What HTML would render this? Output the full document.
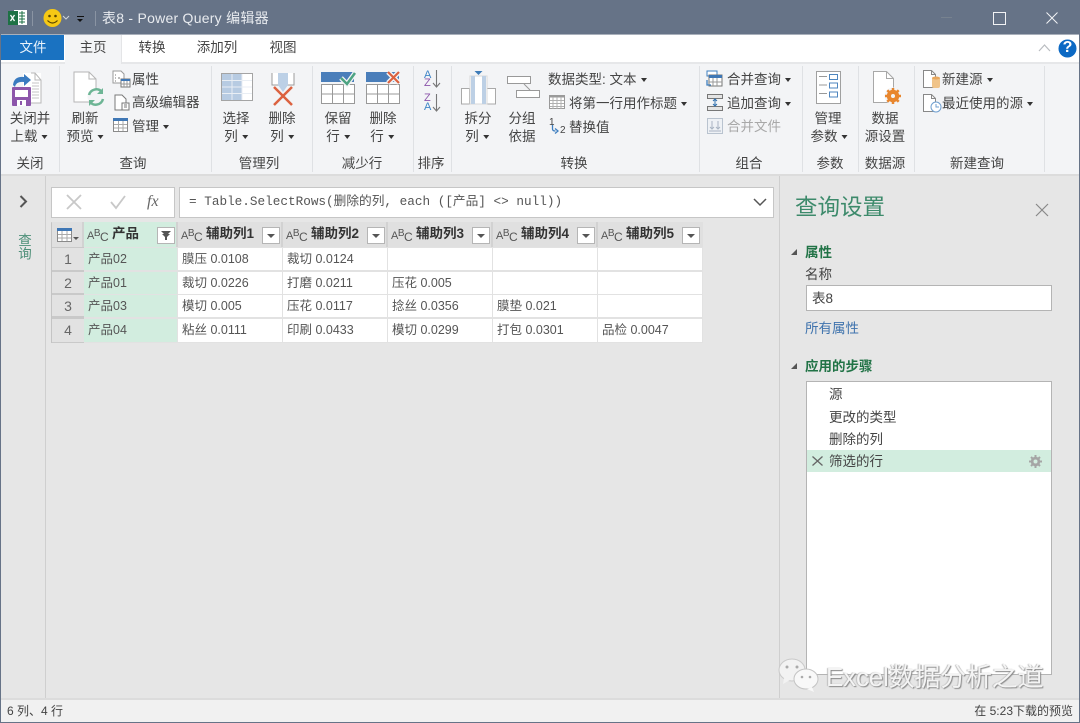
<!DOCTYPE html>
<html lang="zh"><head><meta charset="utf-8"><title>表8 - Power Query 编辑器</title>
<style>
html,body{margin:0;padding:0}
body{width:1080px;height:723px;overflow:hidden;position:relative;background:#e6e6e6;font-family:"Liberation Sans","Noto Sans CJK SC",sans-serif;font-size:13.5px;color:#444}
.a{position:absolute}
.t{position:absolute;white-space:nowrap;line-height:18px;height:18px;margin-top:1px}
.c{transform:translateX(-50%)}
.sep{position:absolute;top:66px;height:106px;width:1px;background:#dfe1e4}
.car::after{content:"";display:inline-block;border:3px solid transparent;border-top:4px solid #333;border-bottom:0;margin-left:4px;vertical-align:2px}
svg{position:absolute;overflow:visible}
.h{position:absolute;top:222px;height:25px;background:#e0e0e0;border-right:2px solid #d2d2d2;box-sizing:border-box}
.h b{position:absolute;top:3px;font-size:13.5px;color:#333;white-space:nowrap;line-height:18px}
.abc{position:absolute;top:5px;left:3px;font-size:11px;color:#555;line-height:16px;white-space:nowrap;letter-spacing:-.5px}
.abc i{font-style:normal;position:relative;top:-3px;font-size:10px}
.abc u{text-decoration:none;position:relative;top:2px;font-size:12px}
.dd{position:absolute;top:5px;width:18px;height:17px;background:#fff;border:1px solid #b5b5b5;box-sizing:border-box}
.dd::after{content:"";position:absolute;left:4px;top:6px;border:4px solid transparent;border-top:4px solid #555;border-bottom:0}
.cell{position:absolute;line-height:23px;font-size:12.5px;color:#555;white-space:nowrap;padding-left:4px;box-sizing:border-box;background:#fff}
.n{position:absolute;left:52px;width:32px;text-align:center;background:#e2e2e2;font-size:14px;color:#666;line-height:23px}
</style></head><body>

<!-- title bar -->
<div class="a" style="left:0;top:0;width:1080px;height:34px;background:#667387"></div>
<div class="a" style="left:0;top:34px;width:1080px;height:1px;background:#a9b0bb"></div>
<svg style="left:8px;top:9px" width="20" height="18"><rect x="6" y="1" width="13" height="15" fill="#fff"/><path d="M11 4h6M11 7h6M11 10h6M11 13h6M14 2v13" stroke="#1e7145" stroke-width="1"/><rect x="0" y="2" width="10" height="14" fill="#1e7145"/><path d="M2.500 6l4 6M6.500 6l-4 6" stroke="#fff" stroke-width="1.300"/></svg>
<div class="a" style="left:32px;top:11px;width:1px;height:15px;background:#8a94a3"></div>
<svg style="left:43px;top:9px" width="19" height="19"><circle cx="9.500" cy="9" r="9" fill="#f6c915"/><circle cx="6.500" cy="7" r="1.300" fill="#5a4500"/><circle cx="12.500" cy="7" r="1.300" fill="#5a4500"/><path d="M4.500 11.500q5 5 10 0" stroke="#5a4500" stroke-width="1.200" fill="none"/></svg>
<svg style="left:62px;top:15px" width="8" height="6"><path d="M1 1l3 3 3-3" stroke="#cfd4da" fill="none"/></svg>
<div class="a" style="left:77px;top:16px;width:7px;height:1px;background:#111"></div>
<div class="a" style="left:77px;top:19px;border:3.500px solid transparent;border-top:3px solid #111;border-bottom:0"></div>
<div class="a" style="left:95px;top:11px;width:1px;height:15px;background:#8a94a3"></div>
<div class="t" style="left:102px;top:8px;color:#e8ebef;font-size:14px;letter-spacing:.25px">表8 - Power Query 编辑器</div>
<div class="a" style="left:941px;top:17px;width:11px;height:1px;background:#77828f"></div>
<div class="a" style="left:993px;top:12px;width:11px;height:11px;border:1px solid #f2f3f5"></div>
<svg style="left:1046px;top:12px" width="12" height="12"><path d="M.5.500l11 11M11.500.500l-11 11" stroke="#f2f3f5"/></svg>

<!-- tab row -->
<div class="a" style="left:1px;top:35px;width:1078px;height:27px;background:#fff"></div>
<div class="a" style="left:1px;top:35px;width:63px;height:25px;background:#1a72c1"></div>
<div class="t c" style="left:33px;top:38px;color:#eaf3fb">文件</div>
<div class="a" style="left:65px;top:35px;width:57px;height:29px;background:#f3f4f6;border-right:1px solid #e4e5e7;box-sizing:border-box"></div>
<div class="t c" style="left:93px;top:38px">主页</div>
<div class="t c" style="left:152px;top:38px">转换</div>
<div class="t c" style="left:217px;top:38px">添加列</div>
<div class="t c" style="left:283px;top:38px">视图</div>
<svg style="left:1038px;top:44px" width="13" height="8"><path d="M1 7l5.500-6 5.500 6" stroke="#b9bcc0" fill="none" stroke-width="1.200"/></svg>
<svg style="left:1058px;top:39px" width="19" height="19"><circle cx="9.500" cy="9.500" r="9" fill="#0c69c4"/></svg>
<div class="t c" style="left:1067.500px;top:38px;color:#fff;font-weight:bold;font-size:16px">?</div>

<!-- ribbon -->
<div class="a" style="left:1px;top:64px;width:1078px;height:111px;background:#f3f4f6"></div>
<div class="a" style="left:65px;top:62px;width:56px;height:3px;background:#f3f4f6"></div>
<div class="a" style="left:0;top:62px;width:65px;height:2px;background:#e6e7e9"></div>
<div class="a" style="left:122px;top:62px;width:958px;height:2px;background:#e6e7e9"></div>
<div class="a" style="left:1px;top:174px;width:1078px;height:2px;background:#dcdcdc"></div>
<div class="sep" style="left:59px"></div><div class="sep" style="left:211px"></div><div class="sep" style="left:312px"></div><div class="sep" style="left:413px"></div><div class="sep" style="left:451px"></div><div class="sep" style="left:699px"></div><div class="sep" style="left:802px"></div><div class="sep" style="left:858px"></div><div class="sep" style="left:914px"></div><div class="sep" style="left:1044px"></div>

<!-- close & load -->
<svg style="left:11px;top:71px" width="32" height="36"><path d="M12 2h21l7 7v23H12z" transform="translate(0 0)" fill="#fff" stroke="#b8b8b8" style="display:none"/><path d="M12 2h15l3 0 0 0 0 30H12z" fill="#fff" stroke="none"/><path d="M20 2h4l6 7v23H20" fill="#fff" stroke="#b8b8b8"/><path d="M24 2v7h6" fill="none" stroke="#b8b8b8"/><path d="M21 12h7M21 15h7M21 18h7M21 21h7M21 24h7M21 27h7" stroke="#c4c4c4"/><path d="M2 14q1-9 11-8l0-3 7 6-7 6v-4q-8-1-9 5z" fill="#3a7bc0"/><rect x="1" y="16" width="19" height="19" rx="1" fill="#8d56ab"/><rect x="4" y="19" width="13" height="7" fill="#fff"/><rect x="6" y="29" width="9" height="6" fill="#fff"/><rect x="9" y="30" width="2" height="4" fill="#8d56ab"/></svg>
<div class="t c" style="left:30px;top:109px">关闭并</div>
<div class="t c car" style="left:29px;top:127px">上载</div>
<div class="t c" style="left:30px;top:154px">关闭</div>

<!-- refresh -->
<svg style="left:73px;top:71px" width="32" height="36"><path d="M1 1h15l7 7v23H1z" fill="#fff" stroke="#b5b5b5"/><path d="M16 1v7h7" fill="none" stroke="#b5b5b5"/><circle cx="23" cy="26" r="8.500" fill="#f3f4f6"/><path d="M16 24a7.500 7.500 0 0 1 13-3" stroke="#6db595" stroke-width="2.500" fill="none"/><path d="M30 17v6h-6z" fill="#6db595"/><path d="M30 28a7.500 7.500 0 0 1-13 3" stroke="#6db595" stroke-width="2.500" fill="none"/><path d="M16 35v-6h6z" fill="#6db595"/></svg>
<div class="t c" style="left:85px;top:109px">刷新</div>
<div class="t c car" style="left:85px;top:127px">预览</div>
<svg style="left:112px;top:70px" width="19" height="18"><path d="M1 1h8l3 3v9H1z" fill="#fff" stroke="#9a9a9a"/><path d="M3 5h1M3 8h1M6 8h2M3 11h1" stroke="#777"/><rect x="9" y="9" width="9" height="8" fill="#fff" stroke="#777"/><rect x="9" y="9" width="9" height="2" fill="#3f77b5"/><path d="M12 11v6M15 11v6M9 14h9" stroke="#999"/></svg>
<div class="t" style="left:132px;top:70px">属性</div>
<svg style="left:114px;top:94px" width="17" height="17"><path d="M1 1h7l4 4v11H1z" fill="#fff" stroke="#7a7a7a"/><rect x="8" y="9" width="7" height="7" fill="#fff" stroke="#777"/><path d="M10 11h3M10 13h3" stroke="#777"/></svg>
<div class="t" style="left:132px;top:93px">高级编辑器</div>
<svg style="left:113px;top:118px" width="16" height="15"><rect x=".5" y=".5" width="14" height="13" fill="#fff" stroke="#8a8a8a"/><rect x="0" y="0" width="15" height="3" fill="#3f77b5"/><path d="M5.500 3v10M10 3v10M1 6.500h13M1 10h13" stroke="#aaa"/></svg>
<div class="t car" style="left:132px;top:117px">管理</div>
<div class="t c" style="left:133px;top:154px">查询</div>

<!-- choose/remove columns -->
<svg style="left:221px;top:73px" width="33" height="29"><rect x=".5" y=".5" width="31" height="27" fill="#fff" stroke="#a4a4a4"/><rect x="1" y="1" width="20" height="26" fill="#b7cbe2"/><path d="M11 1v26M21 1v26M1 7.500h30M1 14h30M1 20.500h30" stroke="#e9eef4"/></svg>
<div class="t c" style="left:236px;top:109px">选择</div>
<div class="t c car" style="left:236px;top:127px">列</div>
<svg style="left:270px;top:72px" width="26" height="34"><path d="M2 1v12h22V1" fill="#fff" stroke="#9c9c9c"/><rect x="8" y="1" width="10" height="13" fill="#bcd0e6"/><path d="M8 13l5 7 5-7z" fill="#bcd0e6"/><path d="M4 15l18 18M22 15L4 33" stroke="#dc6240" stroke-width="2.500"/></svg>
<div class="t c" style="left:282px;top:109px">删除</div>
<div class="t c car" style="left:282px;top:127px">列</div>
<div class="t c" style="left:259px;top:154px">管理列</div>

<!-- keep/remove rows -->
<svg style="left:321px;top:71px" width="35" height="33"><rect x="0" y="1" width="33" height="10" fill="#4a7eba"/><rect x=".5" y="13.500" width="33" height="19" fill="#fff" stroke="#999"/><path d="M11.500 13v20M22.500 13v20M1 23h33" stroke="#999"/><path d="M20 7l6 6 8-11" stroke="#f3f4f6" stroke-width="5" fill="none"/><path d="M20 7l6 6 8-11" stroke="#4ea483" stroke-width="2.500" fill="none"/></svg>
<div class="t c" style="left:338px;top:109px">保留</div>
<div class="t c car" style="left:338px;top:127px">行</div>
<svg style="left:366px;top:71px" width="35" height="33"><rect x="0" y="1" width="33" height="10" fill="#4a7eba"/><rect x=".5" y="13.500" width="33" height="19" fill="#fff" stroke="#999"/><path d="M11.500 13v20M22.500 13v20M1 23h33" stroke="#999"/><path d="M22 1l11 11M33 1L22 12" stroke="#f3f4f6" stroke-width="5"/><path d="M22 1l11 11M33 1L22 12" stroke="#dc6240" stroke-width="2.200"/></svg>
<div class="t c" style="left:383px;top:109px">删除</div>
<div class="t c car" style="left:382px;top:127px">行</div>
<div class="t c" style="left:362px;top:154px">减少行</div>

<!-- sort -->
<div class="t" style="left:424px;top:69px;font-size:11px;line-height:10px;color:#3f86c7;height:10px">A</div>
<div class="t" style="left:424px;top:77px;font-size:11px;line-height:10px;color:#8d56ab;height:10px">Z</div>
<div class="t" style="left:424px;top:92px;font-size:11px;line-height:10px;color:#8d56ab;height:10px">Z</div>
<div class="t" style="left:424px;top:101px;font-size:11px;line-height:10px;color:#3f86c7;height:10px">A</div>
<svg style="left:432px;top:70px" width="10" height="42"><path d="M4.500 0v17M1 13l3.500 4 3.500-4M4.500 24v17M1 37l3.500 4 3.500-4" stroke="#777" fill="none" stroke-width="1.100"/></svg>
<div class="t c" style="left:431px;top:154px">排序</div>

<!-- split / group -->
<svg style="left:461px;top:71px" width="36" height="34"><path d="M.5 33V17.500h8V33zM26 17.500h8.500V33H26z" fill="#fff" stroke="#a9a9a9"/><rect x="9" y="5" width="17" height="28" fill="#fff" stroke="#d8d8d8"/><rect x="10" y="5" width="4" height="28" fill="#bdd0e5"/><rect x="21" y="5" width="4" height="28" fill="#bdd0e5"/><path d="M13.500 0h8l-4 4z" fill="#3e7cb8"/></svg>
<div class="t c" style="left:478px;top:109px">拆分</div>
<div class="t c car" style="left:477px;top:127px">列</div>
<svg style="left:507px;top:76px" width="34" height="24"><rect x=".5" y=".5" width="23" height="7" fill="#fff" stroke="#999"/><rect x="9.500" y="14.500" width="23" height="7" fill="#fff" stroke="#999"/><path d="M17 8l6 6" stroke="#999"/></svg>
<div class="t c" style="left:522px;top:109px">分组</div>
<div class="t c" style="left:522px;top:127px">依据</div>
<div class="t car" style="left:548px;top:70px">数据类型: 文本</div>
<svg style="left:549px;top:95px" width="17" height="15"><rect x=".5" y=".5" width="15" height="13" fill="#fff" stroke="#999"/><rect x="0" y="0" width="16" height="2.500" fill="#9a9a9a"/><path d="M4 2v12M8 2v12M12 2v12M1 5.500h14M1 8.500h14M1 11.500h14" stroke="#b0b0b0"/></svg>
<div class="t car" style="left:569px;top:94px">将第一行用作标题</div>
<div class="t" style="left:549px;top:116px;font-size:10px;color:#444;height:12px;line-height:12px">1</div>
<div class="t" style="left:560px;top:124px;font-size:10px;color:#444;height:12px;line-height:12px">2</div>
<svg style="left:551px;top:124px" width="9" height="10"><path d="M1.500 1v4q0 2 3 2M4 4.500L7 7 4 9.500" stroke="#3f7fc0" fill="none" stroke-width="1.300"/></svg>
<div class="t" style="left:569px;top:118px">替换值</div>
<div class="t c" style="left:574px;top:154px">转换</div>

<!-- combine -->
<svg style="left:706px;top:70px" width="18" height="18"><path d="M1 1h10v5H1z" fill="#fff" stroke="#3f7fc0"/><rect x="3" y="5" width="13" height="11" fill="#fff" stroke="#777"/><rect x="3" y="5" width="13" height="3" fill="#3f77b5"/><path d="M7 8v8M11 8v8M3 12h13" stroke="#999"/><path d="M1 10v5l4 0" stroke="#3f7fc0" fill="none" stroke-width="1.300"/></svg>
<div class="t car" style="left:727px;top:70px">合并查询</div>
<svg style="left:707px;top:94px" width="16" height="17"><rect x=".5" y=".5" width="15" height="4" fill="#e4e4e4" stroke="#777"/><rect x=".5" y="12.500" width="15" height="4" fill="#e4e4e4" stroke="#777"/><path d="M8 5v7M6 7l2-2 2 2M6 10l2 2 2-2" stroke="#2f6fae" fill="none"/></svg>
<div class="t car" style="left:727px;top:94px">追加查询</div>
<svg style="left:707px;top:118px" width="16" height="16"><rect x=".5" y=".5" width="15" height="15" fill="#eef1f5" stroke="#b9c3cf"/><path d="M5 3v8M3 9l2 2 2-2M11 3v8M9 9l2 2 2-2M2 13h12" stroke="#a9b4c2" fill="none"/></svg>
<div class="t" style="left:727px;top:117px;color:#a8a8a8">合并文件</div>
<div class="t c" style="left:749px;top:154px">组合</div>

<!-- params -->
<svg style="left:816px;top:71px" width="26" height="33"><rect x=".5" y=".5" width="24" height="32" fill="#fff" stroke="#a0a0a0"/><path d="M3 5.500h8M3 14h8M3 22.500h8" stroke="#999"/><rect x="13.500" y="3.500" width="8" height="5" fill="#fff" stroke="#4f86bf"/><rect x="13.500" y="12" width="8" height="5" fill="#fff" stroke="#4f86bf"/><rect x="13.500" y="21" width="8" height="5" fill="#fff" stroke="#4f86bf"/></svg>
<div class="t c" style="left:828px;top:109px">管理</div>
<div class="t c car" style="left:829px;top:127px">参数</div>
<div class="t c" style="left:830px;top:154px">参数</div>

<!-- data source -->
<svg style="left:873px;top:71px" width="30" height="34"><path d="M.5.500h13l7 7v24H.5z" fill="#fff" stroke="#a8a8a8"/><path d="M13.500.500v7h7" fill="none" stroke="#a8a8a8"/><circle cx="20" cy="25" r="8.500" fill="#f3f4f6"/><circle cx="20" cy="25" r="4.500" fill="none" stroke="#e8862e" stroke-width="3.500"/><path d="M20 17v16M12 25h16M14.300 19.300l11.400 11.400M25.700 19.300L14.300 30.700" stroke="#e8862e" stroke-width="2.500"/><circle cx="20" cy="25" r="2" fill="#f3f4f6"/></svg>
<div class="t c" style="left:885px;top:109px">数据</div>
<div class="t c" style="left:885px;top:127px">源设置</div>
<div class="t c" style="left:885px;top:154px">数据源</div>

<!-- new source -->
<svg style="left:923px;top:70px" width="18" height="19"><path d="M.5.500h8l4 4v13H.5z" fill="#fff" stroke="#888"/><path d="M8.500.500v4h4" fill="none" stroke="#888"/><rect x="9" y="7" width="8" height="11" rx="2" fill="#f0c48a"/><ellipse cx="13" cy="8" rx="4" ry="1.500" fill="#e8a75d"/></svg>
<div class="t car" style="left:942px;top:70px">新建源</div>
<svg style="left:923px;top:94px" width="19" height="19"><path d="M.5.500h8l4 4v13H.5z" fill="#fff" stroke="#888"/><path d="M8.500.500v4h4" fill="none" stroke="#888"/><circle cx="13" cy="13" r="5" fill="#fff" stroke="#6f9fd0"/><path d="M13 10v3h3" stroke="#6f9fd0" fill="none"/></svg>
<div class="t car" style="left:942px;top:94px">最近使用的源</div>
<div class="t c" style="left:977px;top:154px">新建查询</div>

<!-- left nav -->
<div class="a" style="left:45px;top:176px;width:1px;height:522px;background:#cfcfcf"></div>
<svg style="left:19px;top:195px" width="9" height="13"><path d="M1.500 1l5.500 5.500L1.500 12" stroke="#555" stroke-width="2" fill="none"/></svg>
<div class="a" style="left:16px;top:233px;writing-mode:vertical-rl;font-size:13.500px;line-height:15px;color:#4d8f78;width:15px">查询</div>

<!-- formula bar -->
<div class="a" style="left:51px;top:187px;width:124px;height:31px;background:#fff;border:1px solid #c6c6c6;box-sizing:border-box"></div>
<svg style="left:66px;top:194px" width="16" height="16"><path d="M1 1l14 14M15 1L1 15" stroke="#c8c8c8" stroke-width="1.800"/></svg>
<svg style="left:110px;top:195px" width="16" height="14"><path d="M1 7l5 6L15 1" stroke="#c8c8c8" stroke-width="1.800" fill="none"/></svg>
<div class="t" style="left:147px;top:192px;font-family:'Liberation Serif',serif;font-style:italic;font-size:16px;color:#666">fx</div>
<div class="a" style="left:179px;top:187px;width:595px;height:31px;background:#fff;border:1px solid #c6c6c6;box-sizing:border-box"></div>
<div class="t" style="left:189px;top:192px;font-family:'Liberation Mono','Noto Sans CJK SC',monospace;font-size:12.700px;color:#555">= Table.SelectRows(删除的列, each ([产品] &lt;&gt; null))</div>
<svg style="left:753px;top:198px" width="14" height="9"><path d="M1 1l6 6 6-6" stroke="#555" stroke-width="1.500" fill="none"/></svg>

<!-- table -->
<div class="a" style="left:51px;top:222px;width:652px;height:121px;background:#e2e2e2"></div>
<div class="a" style="left:51px;top:222px;width:1px;height:121px;background:#c4c4c4"></div>
<div class="a" style="left:52px;top:247px;width:32px;height:96px;background:#c9c9c9"></div>
<div class="a" style="left:51px;top:222px;width:652px;height:1px;background:#cccccc"></div>
<div class="h" style="left:52px;width:32px"></div>
<svg style="left:57px;top:228px" width="24" height="14"><rect x=".5" y=".5" width="14" height="13" fill="#fff" stroke="#8a8a8a"/><rect x="0" y="0" width="15" height="3" fill="#3f77b5"/><path d="M5 3v10M10 3v10M1 6.500h13M1 10h13" stroke="#aaa"/><path d="M16 9h6l-3 3z" fill="#555"/></svg>
<div class="h" style="left:84px;width:94px;background:#d2eddf"><div class="abc">A<i>B</i><u>C</u></div><b style="left:28px">产品</b><div class="dd" style="left:73px;width:18px"></div><svg style="left:75px;top:8px" width="14" height="11"><path d="M2 1h10L8 5v5H6V5z" fill="#555"/></svg></div>
<div class="h" style="left:178px;width:105px"><div class="abc">A<i>B</i><u>C</u></div><b style="left:28px">辅助列1</b><div class="dd" style="left:84px"></div></div>
<div class="h" style="left:283px;width:105px"><div class="abc">A<i>B</i><u>C</u></div><b style="left:28px">辅助列2</b><div class="dd" style="left:84px"></div></div>
<div class="h" style="left:388px;width:105px"><div class="abc">A<i>B</i><u>C</u></div><b style="left:28px">辅助列3</b><div class="dd" style="left:84px"></div></div>
<div class="h" style="left:493px;width:105px"><div class="abc">A<i>B</i><u>C</u></div><b style="left:28px">辅助列4</b><div class="dd" style="left:84px"></div></div>
<div class="h" style="left:598px;width:105px;border-right:0"><div class="abc">A<i>B</i><u>C</u></div><b style="left:28px">辅助列5</b><div class="dd" style="left:84px"></div></div>

<div class="n" style="top:248px;height:22px">1</div><div class="n" style="top:272px;height:21px">2</div><div class="n" style="top:295px;height:21px">3</div><div class="n" style="top:319px;height:23px">4</div>

<div class="cell" style="left:84px;top:248px;width:93px;height:22px;background:#d2eddf">产品02</div>
<div class="cell" style="left:84px;top:272px;width:93px;height:22px;background:#d2eddf">产品01</div>
<div class="cell" style="left:84px;top:295px;width:93px;height:22px;background:#d2eddf">产品03</div>
<div class="cell" style="left:84px;top:319px;width:93px;height:23px;background:#d2eddf">产品04</div>

<div class="cell" style="left:178px;top:248px;width:104px;height:22px">膜压 0.0108</div>
<div class="cell" style="left:283px;top:248px;width:104px;height:22px">裁切 0.0124</div>
<div class="cell" style="left:388px;top:248px;width:104px;height:22px"></div>
<div class="cell" style="left:493px;top:248px;width:104px;height:22px"></div>
<div class="cell" style="left:598px;top:248px;width:104px;height:22px"></div>

<div class="cell" style="left:178px;top:272px;width:104px;height:22px">裁切 0.0226</div>
<div class="cell" style="left:283px;top:272px;width:104px;height:22px">打磨 0.0211</div>
<div class="cell" style="left:388px;top:272px;width:104px;height:22px">压花 0.005</div>
<div class="cell" style="left:493px;top:272px;width:104px;height:22px"></div>
<div class="cell" style="left:598px;top:272px;width:104px;height:22px"></div>

<div class="cell" style="left:178px;top:295px;width:104px;height:22px">模切 0.005</div>
<div class="cell" style="left:283px;top:295px;width:104px;height:22px">压花 0.0117</div>
<div class="cell" style="left:388px;top:295px;width:104px;height:22px">捻丝 0.0356</div>
<div class="cell" style="left:493px;top:295px;width:104px;height:22px">膜垫 0.021</div>
<div class="cell" style="left:598px;top:295px;width:104px;height:22px"></div>

<div class="cell" style="left:178px;top:319px;width:104px;height:23px">粘丝 0.0111</div>
<div class="cell" style="left:283px;top:319px;width:104px;height:23px">印刷 0.0433</div>
<div class="cell" style="left:388px;top:319px;width:104px;height:23px">模切 0.0299</div>
<div class="cell" style="left:493px;top:319px;width:104px;height:23px">打包 0.0301</div>
<div class="cell" style="left:598px;top:319px;width:104px;height:23px">品检 0.0047</div>

<!-- right pane -->
<div class="a" style="left:779px;top:176px;width:1px;height:522px;background:#cfcfcf"></div>
<div class="t" style="left:795px;top:192px;font-size:22.500px;line-height:30px;height:30px;color:#3d8a6b">查询设置</div>
<svg style="left:1035px;top:203px" width="14" height="14"><path d="M1 1l12 12M13 1L1 13" stroke="#888" stroke-width="1.200"/></svg>
<div class="a" style="left:791px;top:249px;border-style:solid;border-width:0 0 6px 6px;border-color:transparent transparent #555 transparent"></div>
<div class="t" style="left:805px;top:243px;color:#217346;font-weight:bold">属性</div>
<div class="t" style="left:805px;top:265px">名称</div>
<div class="a" style="left:806px;top:285px;width:246px;height:26px;background:#fff;border:1px solid #b4b4b4;box-sizing:border-box"></div>
<div class="t" style="left:812px;top:289px">表8</div>
<div class="t" style="left:805px;top:319px;color:#3f73ad">所有属性</div>
<div class="a" style="left:791px;top:363px;border-style:solid;border-width:0 0 6px 6px;border-color:transparent transparent #555 transparent"></div>
<div class="t" style="left:805px;top:357px;color:#217346;font-weight:bold">应用的步骤</div>
<div class="a" style="left:806px;top:381px;width:246px;height:294px;background:#fff;border:1px solid #b4b4b4;box-sizing:border-box"></div>
<div class="t" style="left:829px;top:385px">源</div>
<div class="t" style="left:829px;top:408px">更改的类型</div>
<div class="t" style="left:829px;top:430px">删除的列</div>
<div class="a" style="left:807px;top:450px;width:244px;height:22px;background:#d2eddf"></div>
<svg style="left:812px;top:456px" width="11" height="10"><path d="M.5.500l10 9M10.500.500l-10 9" stroke="#666" stroke-width="1.300"/></svg>
<div class="t" style="left:829px;top:452px">筛选的行</div>
<svg style="left:1029px;top:455px" width="13" height="13"><circle cx="6.500" cy="6.500" r="3.500" fill="none" stroke="#a5a5a5" stroke-width="2.500"/><path d="M6.500 0v13M0 6.500h13M2 2l9 9M11 2l-9 9" stroke="#a5a5a5" stroke-width="2"/><circle cx="6.500" cy="6.500" r="2" fill="#d2eddf"/></svg>

<!-- status bar -->
<div class="a" style="left:0;top:698px;width:1080px;height:25px;background:#f1f1f1;border-top:2px solid #dcdcdc;box-sizing:border-box"></div>
<div class="t" style="left:7px;top:701px;font-size:12px">6 列、4 行</div>
<div class="t" style="right:7px;top:701px;font-size:12px">在 5:23下载的预览</div>

<!-- window edges -->
<div class="a" style="left:0;top:34px;width:1px;height:689px;background:#667387"></div>
<div class="a" style="left:1079px;top:34px;width:1px;height:689px;background:#667387"></div>
<div class="a" style="left:0;top:722px;width:1080px;height:1px;background:#667387"></div>

<!-- watermark -->
<svg style="left:778px;top:657px" width="46" height="34"><ellipse cx="14" cy="13" rx="13" ry="11" fill="#f2f2f2" stroke="#c9c9c9"/><path d="M6 21l-1 6 7-4z" fill="#f2f2f2"/><circle cx="9" cy="10" r="1.500" fill="#aaa"/><circle cx="19" cy="10" r="1.500" fill="#aaa"/><ellipse cx="28" cy="22" rx="12" ry="10" fill="#f8f8f8" stroke="#c4c4c4"/><path d="M34 30l2 5-7-3z" fill="#f8f8f8"/><circle cx="24" cy="20" r="1.300" fill="#aaa"/><circle cx="32" cy="20" r="1.300" fill="#aaa"/></svg>
<div class="t" style="left:826px;top:661px;font-size:26px;line-height:30px;height:30px;color:#f4f4f4;text-shadow:1px 1px 1px #8a8a8a,-1px 0 1px #bbb;letter-spacing:-.2px">Excel数据分析之道</div>
</body></html>
